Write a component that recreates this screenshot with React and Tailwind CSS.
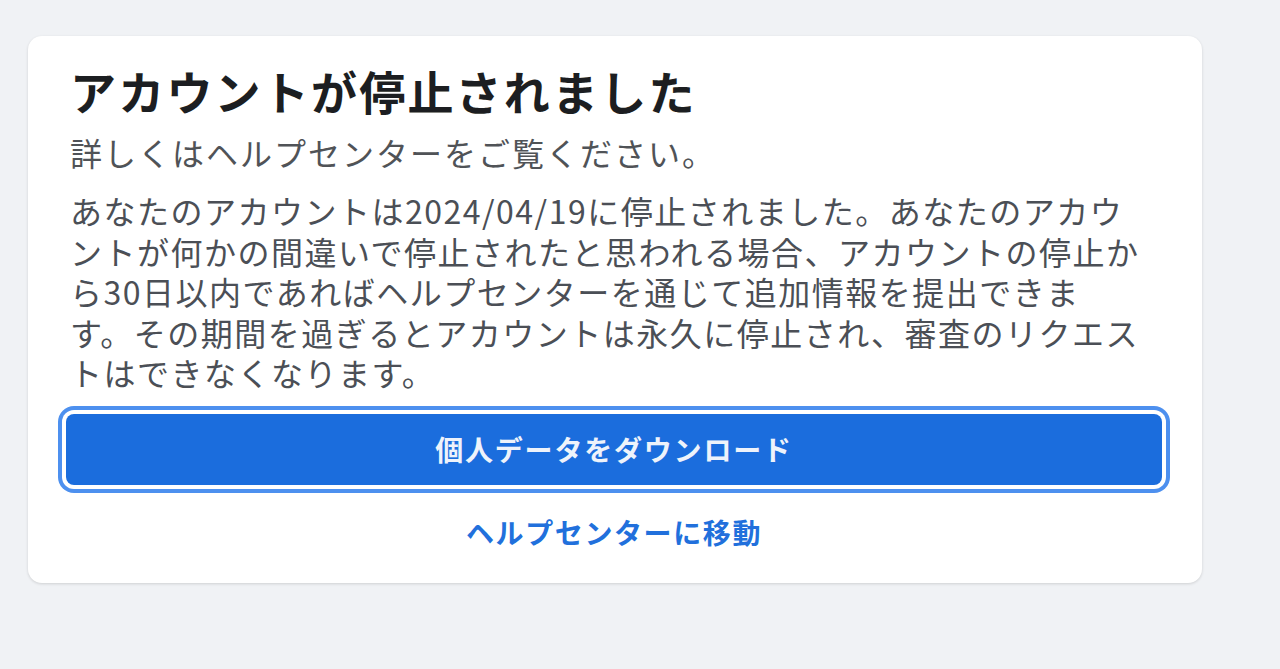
import React from "react";

const bodyLines = [
  "あなたのアカウントは2024/04/19に停止されました。あなたのアカウ",
  "ントが何かの間違いで停止されたと思われる場合、アカウントの停止か",
  "ら30日以内であればヘルプセンターを通じて追加情報を提出できま",
  "す。その期間を過ぎるとアカウントは永久に停止され、審査のリクエス",
  "トはできなくなります。",
];

function App() {
  return (
    <div className="min-h-screen bg-[#f0f2f5] pt-[36px] pl-[28px] font-['Noto_Sans_CJK_JP',sans-serif]">
      <div className="w-[1174px] h-[547px] bg-white rounded-[14px] shadow-[0_1px_3px_rgba(0,0,0,0.14)] px-[38px] pt-[26px]">
        {/* Heading */}
        <h1 className="pl-[4px] text-[46px] leading-[56px] font-bold tracking-[2.2px] text-[#1c1e21]">
          アカウントが停止されました
        </h1>
        <p className="pl-[4px] mt-[14px] text-[32px] leading-[40px] tracking-[2px] text-[#505357]">
          詳しくはヘルプセンターをご覧ください。
        </p>

        {/* Body */}
        <div className="pl-[4px] mt-[18px] text-[32px] leading-[40.5px] tracking-[1.5px] text-[#4b4f56] whitespace-nowrap">
          {bodyLines.map((line, i) => (
            <div key={i}>{line}</div>
          ))}
        </div>

        {/* Actions */}
        <div className="mt-[21px]">
          <button className="w-[1096px] h-[71px] rounded-[8px] bg-[#1b6ddd] text-[#eef3fb] text-[28px] font-bold tracking-[1.8px] ring-4 ring-[#4d90ef] ring-offset-4 ring-offset-white">
            個人データをダウンロード
          </button>
        </div>
        <div className="mt-[27px] text-center pr-[2px]">
          <a className="text-[28px] leading-[40px] font-bold tracking-[1.6px] text-[#2170dc] cursor-pointer">
            ヘルプセンターに移動
          </a>
        </div>
      </div>
    </div>
  );
}

export default App;
